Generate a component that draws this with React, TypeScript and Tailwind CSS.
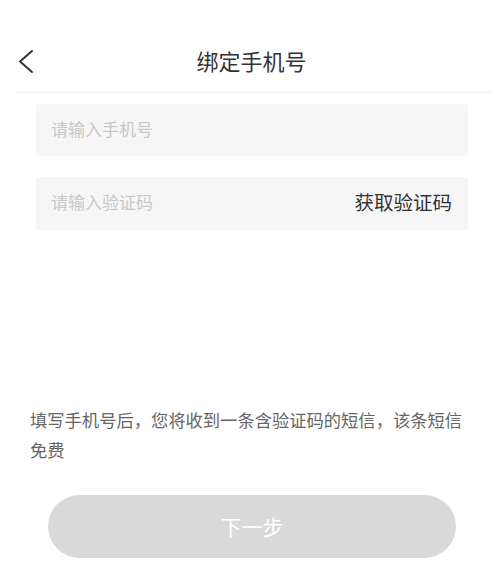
export default function App() {
  return (
    <div
      className="w-[491px] h-[562px] bg-white overflow-hidden"
      style={{ fontFamily: '"Noto Sans CJK SC", "Noto Sans", sans-serif' }}
    >
      <header className="relative h-[92px] pt-[38px] pl-[12px] flex items-start justify-center">
        <button className="absolute left-[17px] top-[49px] text-[#333]">
          <svg width="18" height="26" viewBox="0 0 18 26" fill="none">
            <polyline
              points="15,2 3,12.5 15,23"
              stroke="currentColor"
              strokeWidth="2"
              strokeLinecap="round"
              strokeLinejoin="round"
            />
          </svg>
        </button>
        <h1 className="text-[22px] leading-[44px] text-[#333]">绑定手机号</h1>
      </header>
      <div className="ml-[17px] h-px bg-[#efefef]" />

      <div className="pl-[36px] pr-[23px] pt-[11px] flex flex-col gap-[21px]">
        <div className="h-[52px] rounded-[4px] bg-[#f6f6f6] flex items-center px-[15px] pb-[3px]">
          <span className="text-[17px] text-[#c8c8c8]">请输入手机号</span>
        </div>
        <div className="h-[53px] rounded-[4px] bg-[#f6f6f6] flex items-center justify-between pl-[15px] pr-[16px] pb-[3px]">
          <span className="text-[17px] text-[#c8c8c8]">请输入验证码</span>
          <span className="text-[19.5px] text-[#333]">获取验证码</span>
        </div>
      </div>

      <p className="mt-[175px] pl-[30px] pr-[24px] text-[17.3px] leading-[30px] text-[#666]">
        填写手机号后，您将收到一条含验证码的短信，该条短信免费
      </p>

      <div className="pl-[48px] pr-[35px] mt-[30px]">
        <button className="w-full h-[63px] rounded-full bg-[#d9d9d9] text-white text-[21px]">
          下一步
        </button>
      </div>
    </div>
  );
}
